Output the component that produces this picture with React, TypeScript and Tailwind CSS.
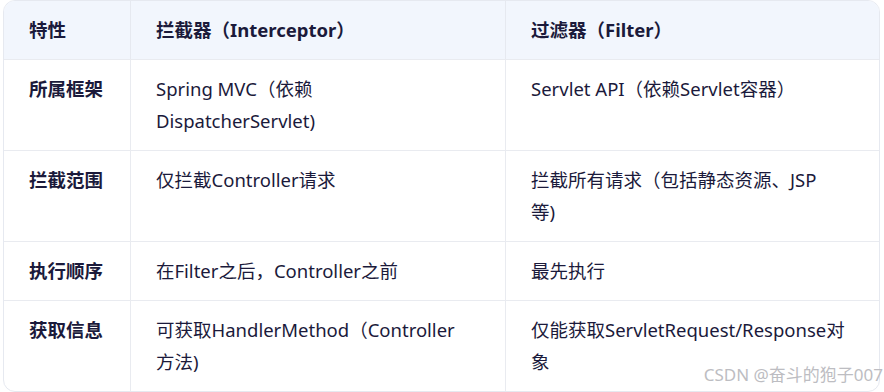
import { Fragment } from "react";

const rows = [
  {
    name: "所属框架",
    a: ["Spring MVC（依赖", "DispatcherServlet)"],
    b: ["Servlet API（依赖Servlet容器）"],
  },
  {
    name: "拦截范围",
    a: ["仅拦截Controller请求"],
    b: ["拦截所有请求（包括静态资源、JSP", "等)"],
  },
  {
    name: "执行顺序",
    a: ["在Filter之后，Controller之前"],
    b: ["最先执行"],
  },
  {
    name: "获取信息",
    a: ["可获取HandlerMethod（Controller", "方法)"],
    b: ["仅能获取ServletRequest/Response对", "象"],
  },
];

function Lines({ lines }: { lines: string[] }) {
  return (
    <>
      {lines.map((l, i) => (
        <Fragment key={i}>
          {i > 0 && <br />}
          {l}
        </Fragment>
      ))}
    </>
  );
}

export default function App() {
  return (
    <div
      className="relative w-[884px] h-[392px] overflow-hidden bg-white text-[#1b1a3b]"
      style={{ fontFamily: '"Noto Sans", "Noto Sans CJK SC", sans-serif' }}
    >
      <div className="ml-[3px] w-[877px] rounded-[12px] border border-[#e6e9f0] overflow-hidden">
        {/* Header */}
        <div className="grid grid-cols-[126px_375px_375px] bg-[#f2f6fd] font-bold text-[18.5px] leading-[32px]">
          <div className="px-[25px] py-[13px]">特性</div>
          <div className="px-[25px] py-[13px] border-l border-[#e6e9f0]">拦截器（Interceptor）</div>
          <div className="px-[25px] py-[13px] border-l border-[#e6e9f0]">过滤器（Filter）</div>
        </div>

        {/* Rows */}
        {rows.map((r) => (
          <div
            key={r.name}
            className="grid grid-cols-[126px_375px_375px] border-t border-[#e9ebf0] text-[18.5px] leading-[32px]"
          >
            <div className="px-[25px] py-[13px] font-bold">{r.name}</div>
            <div className="px-[25px] py-[13px] border-l border-[#e9ebf0] whitespace-nowrap">
              <Lines lines={r.a} />
            </div>
            <div className="px-[25px] py-[13px] border-l border-[#e9ebf0] whitespace-nowrap">
              <Lines lines={r.b} />
            </div>
          </div>
        ))}
      </div>

      {/* Watermark */}
      <div className="absolute right-[1px] bottom-[5px] text-[17px] leading-[24px] text-[#bdbdc2] whitespace-nowrap">
        CSDN @奋斗的狍子007
      </div>
    </div>
  );
}
